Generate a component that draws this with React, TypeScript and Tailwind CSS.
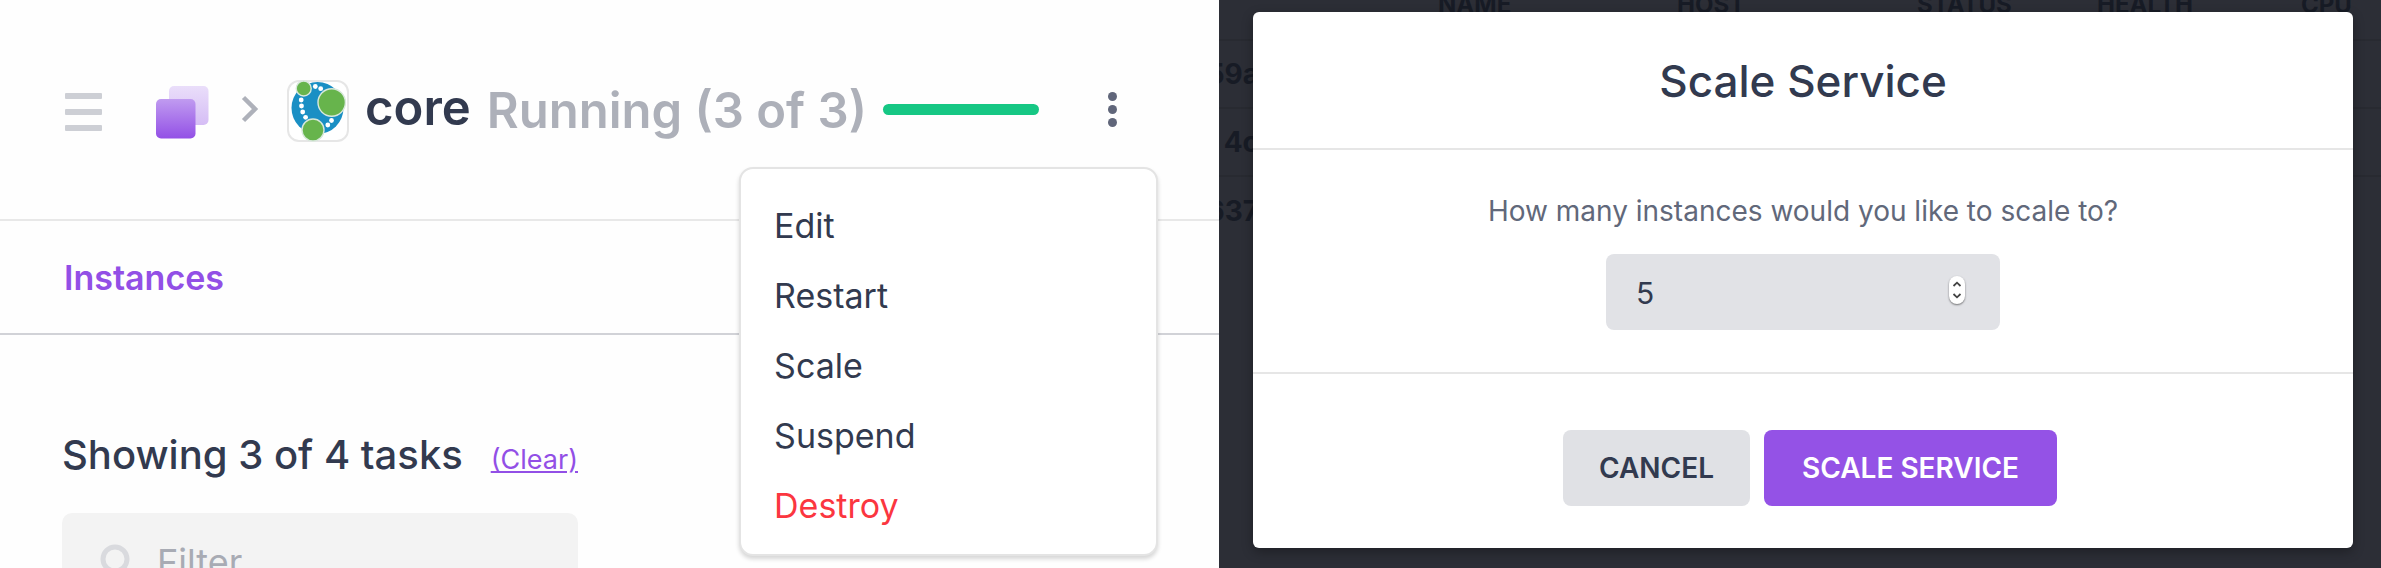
import React from "react";

const menu = ["Edit", "Restart", "Scale", "Suspend"];

const columns = [
  { name: "NAME", width: "w-[239px]" },
  { name: "HOST", width: "w-[240px]" },
  { name: "STATUS", width: "w-[180px]" },
  { name: "HEALTH", width: "w-[204px]" },
  { name: "CPU", width: "w-auto" },
];

const rows = ["59a", "4c", "637"];

function ServiceLogo() {
  return (
    <svg viewBox="0 0 62 62" className="size-[62px] shrink-0" role="img" aria-label="core logo">
      <rect x="1" y="1" width="60" height="60" rx="11" fill="#fff" stroke="#e6e6e6" strokeWidth="2" />
      <circle cx="30.500" cy="28" r="26" fill="#1a8fc4" />
      <g fill="#67b44c" stroke="#d8e8dc" strokeWidth="1.4">
        <circle cx="16.700" cy="8.500" r="7.500" />
        <circle cx="44.700" cy="22.500" r="13.700" />
        <circle cx="26" cy="50" r="11" />
      </g>
      <g fill="#fff">
        <circle cx="28.300" cy="6.500" r="2.400" />
        <circle cx="33.700" cy="8.700" r="2.400" />
        <circle cx="14.200" cy="20" r="2.400" />
        <circle cx="14.500" cy="26" r="2.400" />
        <circle cx="15.700" cy="32" r="2.400" />
        <circle cx="18.600" cy="37.300" r="2.400" />
        <circle cx="44.500" cy="40.500" r="2.400" />
        <circle cx="40.800" cy="45" r="2.400" />
      </g>
    </svg>
  );
}

function ServicePanel() {
  return (
    <section className="relative w-[51.2%] shrink-0 bg-[#fefefe]">
      <header className="flex h-[221px] items-start border-b-2 border-[#e8e8e8] pt-20 pl-[65px]">
        <button aria-label="Toggle navigation" className="mt-[13px] flex w-[37px] flex-col gap-[10px]">
          <span className="h-[6px] w-full rounded-[1px] bg-[#cdcfd5]" />
          <span className="h-[6px] w-full rounded-[1px] bg-[#cdcfd5]" />
          <span className="h-[6px] w-full rounded-[1px] bg-[#cdcfd5]" />
        </button>
        <a href="#services" aria-label="Services" className="mt-[6px] ml-[54px]">
          <svg viewBox="0 0 53 53" className="size-[53px]">
            <defs>
              <linearGradient id="back" x1="0" y1="0" x2="0" y2="1">
                <stop offset="0" stopColor="#eadefa" />
                <stop offset="1" stopColor="#d5bdf5" />
              </linearGradient>
              <linearGradient id="front" x1="0" y1="0" x2="0" y2="1">
                <stop offset="0" stopColor="#c09bf0" />
                <stop offset="1" stopColor="#9350e6" />
              </linearGradient>
            </defs>
            <rect x="13" y="0" width="39.500" height="39" rx="5" fill="url(#back)" />
            <rect x="0" y="13" width="39.500" height="39.500" rx="5" fill="url(#front)" />
          </svg>
        </a>
        <svg viewBox="0 0 18 28" className="mt-[15px] ml-[32px] h-7 w-[18px]" fill="none" stroke="#aeb1ba" strokeWidth="4.500">
          <path d="M2.500 2.500 L14 14 L2.500 25.500" />
        </svg>
        <div className="ml-7">
          <ServiceLogo />
        </div>
        <h1 className="ml-4 text-[49px] leading-[56px] font-semibold text-[#323a4f]">core</h1>
        <p className="ml-4 text-[49px] leading-[62px] font-semibold text-[#adb0b9]">Running (3 of 3)</p>
        <div className="mt-6 ml-4 h-[11px] w-[156px] rounded-full bg-[#16c784]" />
        <button aria-label="Actions" className="mt-3 ml-[69px] flex flex-col gap-1">
          <span className="size-[9px] rounded-full bg-[#60667a]" />
          <span className="size-[9px] rounded-full bg-[#60667a]" />
          <span className="size-[9px] rounded-full bg-[#60667a]" />
        </button>
      </header>
      <nav className="flex h-[114px] items-center border-b-2 border-[#d1d2d7] pl-16">
        <a href="#instances" className="text-[34px] font-semibold text-[#924fe6]">Instances</a>
      </nav>
      <div className="w-[578px] pt-[90px] pl-[62px]">
        <div className="flex items-baseline justify-between">
          <h2 className="text-[40px] leading-[60px] font-medium text-[#323a4f]">Showing 3 of 4 tasks</h2>
          <a href="#clear" className="text-[27px] text-[#924fe6] underline">(Clear)</a>
        </div>
        <label className="mt-7 flex h-[98px] items-center rounded-[10px] bg-[#f3f3f3] pl-[38px]">
          <svg viewBox="0 0 36 36" className="size-9 shrink-0" fill="none" stroke="#d9dade" strokeWidth="5">
            <circle cx="15" cy="15" r="12" />
            <path d="M23 23 L33 33" />
          </svg>
          <input type="text" aria-label="Filter" placeholder="Filter" className="ml-[21px] w-full min-w-0 bg-transparent text-[36px] outline-none placeholder:text-[#a8abb4]" />
        </label>
      </div>
      <div className="absolute top-[167px] right-[61px] w-[419px] rounded-[14px] border-2 border-[#e4e4e4] bg-white px-[33px] pt-[21px] pb-[14px] shadow-[0_3px_4px_rgba(0,0,0,0.16)]">
        <ul>
          {menu.map((item) => (
            <li key={item}>
              <button className="block h-[70px] w-full text-left text-[34px] text-[#323a4f]">{item}</button>
            </li>
          ))}
          <li>
            <button className="block h-[70px] w-full text-left text-[34px] text-[#fb3640]">Destroy</button>
          </li>
        </ul>
      </div>
    </section>
  );
}

function InstanceTable() {
  return (
    <div className="absolute inset-0 overflow-hidden text-[#171b25]">
      <table className="w-full table-fixed border-collapse">
        <thead>
          <tr className="h-10 border-b-2 border-[#282a31] text-left align-top text-[24px] leading-[10px] font-bold">
            <th className="w-[219px] p-0" aria-label="ID" />
            {columns.map((c) => (
              <th key={c.name} scope="col" className={`${c.width} p-0`}>{c.name}</th>
            ))}
          </tr>
        </thead>
        <tbody>
          {rows.map((id) => (
            <tr key={id} className="h-[68px] border-b-2 border-[#282a31] text-[28px] font-bold last:border-b-0">
              <td className="p-0" colSpan={6}>
                <div className="flex w-10 justify-end">{id}</div>
              </td>
            </tr>
          ))}
        </tbody>
      </table>
    </div>
  );
}

function ScaleDialog() {
  return (
    <form role="dialog" aria-labelledby="scale-title" className="relative flex w-full flex-col rounded-md bg-white shadow-[0_4px_12px_rgba(0,0,0,0.3)]">
      <h2 id="scale-title" className="flex h-[138px] items-center justify-center border-b-2 border-[#e6e6e6] pt-[2px] text-[44px] font-medium text-[#323a4f]">
        Scale Service
      </h2>
      <div className="flex h-56 flex-col items-center border-b-2 border-[#e6e6e6] pt-10">
        <label htmlFor="count" className="text-[28px] leading-[42px] text-[#61687a]">How many instances would you like to scale to?</label>
        <div className="relative mt-[22px] h-[76px] w-[394px]">
          <input id="count" type="number" defaultValue={5} className="size-full appearance-none rounded-lg bg-[#e1e2e6] px-[30px] pt-[2px] text-[30px] text-[#323a4f] outline-none [&::-webkit-inner-spin-button]:appearance-none" />
          <svg viewBox="0 0 16 28" className="absolute top-[22px] right-[35px] h-7 w-4 rounded-full bg-white shadow-[0_1px_2px_rgba(0,0,0,0.5)]" fill="none" stroke="#444" strokeWidth="1.800">
            <path d="M4.500 10 L8 6.700 L11.500 10 M4.500 18 L8 21.300 L11.500 18" />
          </svg>
        </div>
      </div>
      <div className="flex h-[174px] items-start justify-center gap-[14px] pt-14 pl-[14px]">
        <button type="button" className="h-[76px] rounded-lg bg-[#e0e1e5] px-9 text-[28px] font-semibold text-[#323a4f]">CANCEL</button>
        <button type="submit" className="h-[76px] rounded-lg bg-[#9452e6] px-[38px] text-[28px] font-semibold text-white">SCALE SERVICE</button>
      </div>
    </form>
  );
}

export default function App() {
  return (
    <main className="flex h-screen min-h-[568px] overflow-hidden bg-[#fefefe] font-['Inter',sans-serif]">
      <ServicePanel />
      <section className="relative flex flex-1 items-start bg-[#2c2e36] pt-3 pr-7 pl-[34px]">
        <InstanceTable />
        <ScaleDialog />
      </section>
    </main>
  );
}
